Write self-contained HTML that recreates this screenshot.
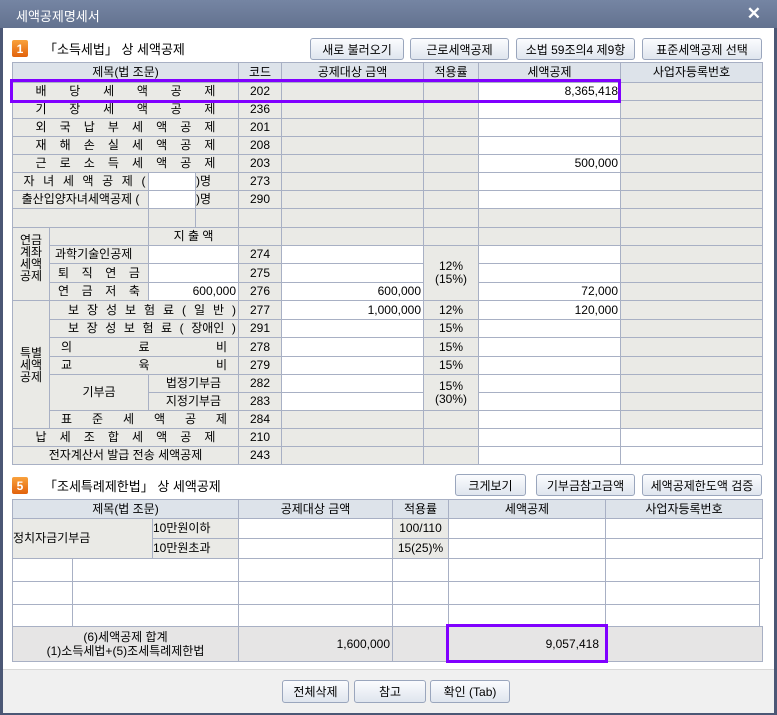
<!DOCTYPE html>
<html><head><meta charset="utf-8"><style>
*{margin:0;padding:0;box-sizing:border-box}
body{width:777px;height:715px;background:#4b5775;position:relative;overflow:hidden;font-family:"Liberation Sans","Noto Sans CJK KR",sans-serif;font-size:12px;color:#000}
#title{position:absolute;left:0;top:0;width:777px;height:28px;background:linear-gradient(#7585a3,#63728f);color:#fff;font-size:13px;padding:6px 0 0 16px}
#x{position:absolute;right:16px;top:4px;color:#fff;font-size:17px;font-weight:bold}
#body{position:absolute;left:3px;top:28px;width:771px;height:642px;background:#fff}
#foot{position:absolute;left:3px;top:669px;width:771px;height:44px;background:#f0f0f0;border-top:1px solid #d8d8d8}
.c{position:absolute;border:1px solid #a8b0c4;display:flex;align-items:center;justify-content:center;white-space:nowrap;line-height:13px}
.g{background:#eaeae6}.w{background:#fff}.h{background:#dde3ea}
.r{justify-content:flex-end;padding-right:2px}
.d{display:flex;justify-content:space-between}
.btn{position:absolute;border:1px solid #9aa6bd;border-radius:3px;background:linear-gradient(#fbfcfe,#dfe5ee);display:flex;align-items:center;justify-content:center;font-size:12px}
.ic{position:absolute;width:16px;height:17px;border-radius:2px;background:linear-gradient(#f9a23c,#e2620c);color:#fff;font-weight:bold;font-size:12px;display:flex;align-items:center;justify-content:center}
.lbl{position:absolute;font-size:13px}
.pb{position:absolute;border:3px solid #8000ff}
</style></head><body>
<div id="title">세액공제명세서</div><div id="x">✕</div>
<div id="body"></div><div id="foot"></div>

<div class="ic" style="left:12px;top:40px">1</div>
<div class="lbl" style="left:44px;top:39px">「소득세법」 상 세액공제</div>
<div class="btn" style="left:310px;top:38px;width:94px;height:22px">새로 불러오기</div>
<div class="btn" style="left:410px;top:38px;width:99px;height:22px">근로세액공제</div>
<div class="btn" style="left:516px;top:38px;width:119px;height:22px">소법 59조의4 제9항</div>
<div class="btn" style="left:642px;top:38px;width:120px;height:22px">표준세액공제 선택</div>

<!-- header -->
<div class="c h" style="left:12px;top:62px;width:227px;height:21px">제목(법 조문)</div>
<div class="c h" style="left:238px;top:62px;width:44px;height:21px">코드</div>
<div class="c h" style="left:281px;top:62px;width:143px;height:21px">공제대상 금액</div>
<div class="c h" style="left:423px;top:62px;width:56px;height:21px">적용률</div>
<div class="c h" style="left:478px;top:62px;width:143px;height:21px">세액공제</div>
<div class="c h" style="left:620px;top:62px;width:143px;height:21px">사업자등록번호</div>

<!-- rows 0-4 -->
<div class="c g" style="left:12px;top:82px;width:227px;height:19px"><span class="d" style="width:180px"><span>배</span><span>당</span><span>세</span><span>액</span><span>공</span><span>제</span></span></div>
<div class="c g" style="left:238px;top:82px;width:44px;height:19px">202</div>
<div class="c g" style="left:281px;top:82px;width:143px;height:19px"></div>
<div class="c g" style="left:423px;top:82px;width:56px;height:19px"></div>
<div class="c w r" style="left:478px;top:82px;width:143px;height:19px">8,365,418</div>
<div class="c g" style="left:620px;top:82px;width:143px;height:19px"></div>

<div class="c g" style="left:12px;top:100px;width:227px;height:19px"><span class="d" style="width:180px"><span>기</span><span>장</span><span>세</span><span>액</span><span>공</span><span>제</span></span></div>
<div class="c g" style="left:238px;top:100px;width:44px;height:19px">236</div>
<div class="c g" style="left:281px;top:100px;width:143px;height:19px"></div>
<div class="c g" style="left:423px;top:100px;width:56px;height:19px"></div>
<div class="c w r" style="left:478px;top:100px;width:143px;height:19px"></div>
<div class="c g" style="left:620px;top:100px;width:143px;height:19px"></div>

<div class="c g" style="left:12px;top:118px;width:227px;height:19px"><span class="d" style="width:180px"><span>외</span><span>국</span><span>납</span><span>부</span><span>세</span><span>액</span><span>공</span><span>제</span></span></div>
<div class="c g" style="left:238px;top:118px;width:44px;height:19px">201</div>
<div class="c g" style="left:281px;top:118px;width:143px;height:19px"></div>
<div class="c g" style="left:423px;top:118px;width:56px;height:19px"></div>
<div class="c w" style="left:478px;top:118px;width:143px;height:19px"></div>
<div class="c g" style="left:620px;top:118px;width:143px;height:19px"></div>

<div class="c g" style="left:12px;top:136px;width:227px;height:19px"><span class="d" style="width:180px"><span>재</span><span>해</span><span>손</span><span>실</span><span>세</span><span>액</span><span>공</span><span>제</span></span></div>
<div class="c g" style="left:238px;top:136px;width:44px;height:19px">208</div>
<div class="c g" style="left:281px;top:136px;width:143px;height:19px"></div>
<div class="c g" style="left:423px;top:136px;width:56px;height:19px"></div>
<div class="c w" style="left:478px;top:136px;width:143px;height:19px"></div>
<div class="c g" style="left:620px;top:136px;width:143px;height:19px"></div>

<div class="c g" style="left:12px;top:154px;width:227px;height:19px"><span class="d" style="width:180px"><span>근</span><span>로</span><span>소</span><span>득</span><span>세</span><span>액</span><span>공</span><span>제</span></span></div>
<div class="c g" style="left:238px;top:154px;width:44px;height:19px">203</div>
<div class="c g" style="left:281px;top:154px;width:143px;height:19px"></div>
<div class="c g" style="left:423px;top:154px;width:56px;height:19px"></div>
<div class="c w r" style="left:478px;top:154px;width:143px;height:19px">500,000</div>
<div class="c g" style="left:620px;top:154px;width:143px;height:19px"></div>

<!-- rows 5-6 -->
<div class="c g" style="left:12px;top:172px;width:137px;height:19px"><span class="d" style="width:122px;margin-left:8px"><span>자</span><span>녀</span><span>세</span><span>액</span><span>공</span><span>제</span><span>(</span></span></div>
<div class="c w" style="left:148px;top:172px;width:48px;height:19px"></div>
<div class="c g" style="left:195px;top:172px;width:44px;height:19px;justify-content:flex-start">)명</div>
<div class="c g" style="left:238px;top:172px;width:44px;height:19px">273</div>
<div class="c g" style="left:281px;top:172px;width:143px;height:19px"></div>
<div class="c g" style="left:423px;top:172px;width:56px;height:19px"></div>
<div class="c w" style="left:478px;top:172px;width:143px;height:19px"></div>
<div class="c g" style="left:620px;top:172px;width:143px;height:19px"></div>

<div class="c g" style="left:12px;top:190px;width:137px;height:19px">출산입양자녀세액공제 (</div>
<div class="c w" style="left:148px;top:190px;width:48px;height:19px"></div>
<div class="c g" style="left:195px;top:190px;width:44px;height:19px;justify-content:flex-start">)명</div>
<div class="c g" style="left:238px;top:190px;width:44px;height:19px">290</div>
<div class="c g" style="left:281px;top:190px;width:143px;height:19px"></div>
<div class="c g" style="left:423px;top:190px;width:56px;height:19px"></div>
<div class="c w" style="left:478px;top:190px;width:143px;height:19px"></div>
<div class="c g" style="left:620px;top:190px;width:143px;height:19px"></div>

<!-- row 7 -->
<div class="c g" style="left:12px;top:208px;width:137px;height:20px"></div>
<div class="c g" style="left:148px;top:208px;width:48px;height:20px"></div>
<div class="c g" style="left:195px;top:208px;width:44px;height:20px"></div>
<div class="c g" style="left:238px;top:208px;width:44px;height:20px"></div>
<div class="c g" style="left:281px;top:208px;width:143px;height:20px"></div>
<div class="c g" style="left:423px;top:208px;width:56px;height:20px"></div>
<div class="c g" style="left:478px;top:208px;width:143px;height:20px"></div>
<div class="c g" style="left:620px;top:208px;width:143px;height:20px"></div>

<!-- 연금 group -->
<div class="c g" style="left:12px;top:227px;width:38px;height:74px;align-items:flex-start;padding-top:6px;white-space:normal;text-align:center;line-height:12px">연금<br>계좌<br>세액<br>공제</div>
<div class="c g" style="left:49px;top:227px;width:100px;height:19px"></div>
<div class="c g" style="left:148px;top:227px;width:91px;height:19px">지 출 액</div>
<div class="c g" style="left:238px;top:227px;width:44px;height:19px"></div>
<div class="c g" style="left:281px;top:227px;width:143px;height:19px"></div>
<div class="c g" style="left:423px;top:227px;width:56px;height:19px"></div>
<div class="c g" style="left:478px;top:227px;width:143px;height:19px"></div>
<div class="c g" style="left:620px;top:227px;width:143px;height:19px"></div>

<div class="c g" style="left:49px;top:245px;width:100px;height:19px;justify-content:flex-start;padding-left:5px">과학기술인공제</div>
<div class="c w" style="left:148px;top:245px;width:91px;height:19px"></div>
<div class="c g" style="left:238px;top:245px;width:44px;height:19px">274</div>
<div class="c w" style="left:281px;top:245px;width:143px;height:19px"></div>
<div class="c w" style="left:478px;top:245px;width:143px;height:19px"></div>
<div class="c g" style="left:620px;top:245px;width:143px;height:19px"></div>

<div class="c g" style="left:49px;top:263px;width:100px;height:20px"><span class="d" style="width:82px"><span>퇴</span><span>직</span><span>연</span><span>금</span></span></div>
<div class="c w" style="left:148px;top:263px;width:91px;height:20px"></div>
<div class="c g" style="left:238px;top:263px;width:44px;height:20px">275</div>
<div class="c w" style="left:281px;top:263px;width:143px;height:20px"></div>
<div class="c w" style="left:478px;top:263px;width:143px;height:20px"></div>
<div class="c g" style="left:620px;top:263px;width:143px;height:20px"></div>

<div class="c g" style="left:49px;top:282px;width:100px;height:19px"><span class="d" style="width:82px"><span>연</span><span>금</span><span>저</span><span>축</span></span></div>
<div class="c w r" style="left:148px;top:282px;width:91px;height:19px">600,000</div>
<div class="c g" style="left:238px;top:282px;width:44px;height:19px">276</div>
<div class="c w r" style="left:281px;top:282px;width:143px;height:19px">600,000</div>
<div class="c w r" style="left:478px;top:282px;width:143px;height:19px">72,000</div>
<div class="c g" style="left:620px;top:282px;width:143px;height:19px"></div>
<div class="c g" style="left:423px;top:245px;width:56px;height:56px;text-align:center;white-space:normal">12%<br>(15%)</div>

<!-- 특별 group -->
<div class="c g" style="left:12px;top:300px;width:38px;height:129px;white-space:normal;text-align:center;line-height:12px">특별<br>세액<br>공제</div>

<div class="c g" style="left:49px;top:300px;width:190px;height:20px"><span class="d" style="width:168px;margin-left:16px"><span>보</span><span>장</span><span>성</span><span>보</span><span>험</span><span>료</span><span>(</span><span>일</span><span>반</span><span>)</span></span></div>
<div class="c g" style="left:238px;top:300px;width:44px;height:20px">277</div>
<div class="c w r" style="left:281px;top:300px;width:143px;height:20px">1,000,000</div>
<div class="c g" style="left:423px;top:300px;width:56px;height:20px">12%</div>
<div class="c w r" style="left:478px;top:300px;width:143px;height:20px">120,000</div>
<div class="c g" style="left:620px;top:300px;width:143px;height:20px"></div>

<div class="c g" style="left:49px;top:319px;width:190px;height:19px"><span class="d" style="width:168px;margin-left:16px"><span>보</span><span>장</span><span>성</span><span>보</span><span>험</span><span>료</span><span>(</span><span>장애인</span><span>)</span></span></div>
<div class="c g" style="left:238px;top:319px;width:44px;height:19px">291</div>
<div class="c w" style="left:281px;top:319px;width:143px;height:19px"></div>
<div class="c g" style="left:423px;top:319px;width:56px;height:19px">15%</div>
<div class="c w" style="left:478px;top:319px;width:143px;height:19px"></div>
<div class="c g" style="left:620px;top:319px;width:143px;height:19px"></div>

<div class="c g" style="left:49px;top:337px;width:190px;height:20px"><span class="d" style="width:166px"><span>의</span><span>료</span><span>비</span></span></div>
<div class="c g" style="left:238px;top:337px;width:44px;height:20px">278</div>
<div class="c w" style="left:281px;top:337px;width:143px;height:20px"></div>
<div class="c g" style="left:423px;top:337px;width:56px;height:20px">15%</div>
<div class="c w" style="left:478px;top:337px;width:143px;height:20px"></div>
<div class="c g" style="left:620px;top:337px;width:143px;height:20px"></div>

<div class="c g" style="left:49px;top:356px;width:190px;height:19px"><span class="d" style="width:166px"><span>교</span><span>육</span><span>비</span></span></div>
<div class="c g" style="left:238px;top:356px;width:44px;height:19px">279</div>
<div class="c w" style="left:281px;top:356px;width:143px;height:19px"></div>
<div class="c g" style="left:423px;top:356px;width:56px;height:19px">15%</div>
<div class="c w" style="left:478px;top:356px;width:143px;height:19px"></div>
<div class="c g" style="left:620px;top:356px;width:143px;height:19px"></div>

<div class="c g" style="left:49px;top:374px;width:100px;height:37px">기부금</div>
<div class="c g" style="left:148px;top:374px;width:91px;height:19px">법정기부금</div>
<div class="c g" style="left:238px;top:374px;width:44px;height:19px">282</div>
<div class="c w" style="left:281px;top:374px;width:143px;height:19px"></div>
<div class="c w" style="left:478px;top:374px;width:143px;height:19px"></div>
<div class="c g" style="left:620px;top:374px;width:143px;height:19px"></div>
<div class="c g" style="left:148px;top:392px;width:91px;height:19px">지정기부금</div>
<div class="c g" style="left:238px;top:392px;width:44px;height:19px">283</div>
<div class="c w" style="left:281px;top:392px;width:143px;height:19px"></div>
<div class="c w" style="left:478px;top:392px;width:143px;height:19px"></div>
<div class="c g" style="left:620px;top:392px;width:143px;height:19px"></div>
<div class="c g" style="left:423px;top:374px;width:56px;height:37px;text-align:center;white-space:normal">15%<br>(30%)</div>

<div class="c g" style="left:49px;top:410px;width:190px;height:19px"><span class="d" style="width:166px"><span>표</span><span>준</span><span>세</span><span>액</span><span>공</span><span>제</span></span></div>
<div class="c g" style="left:238px;top:410px;width:44px;height:19px">284</div>
<div class="c g" style="left:281px;top:410px;width:143px;height:19px"></div>
<div class="c g" style="left:423px;top:410px;width:56px;height:19px"></div>
<div class="c w" style="left:478px;top:410px;width:143px;height:19px"></div>
<div class="c g" style="left:620px;top:410px;width:143px;height:19px"></div>

<div class="c g" style="left:12px;top:428px;width:227px;height:19px"><span class="d" style="width:180px"><span>납</span><span>세</span><span>조</span><span>합</span><span>세</span><span>액</span><span>공</span><span>제</span></span></div>
<div class="c g" style="left:238px;top:428px;width:44px;height:19px">210</div>
<div class="c g" style="left:281px;top:428px;width:143px;height:19px"></div>
<div class="c g" style="left:423px;top:428px;width:56px;height:19px"></div>
<div class="c w" style="left:478px;top:428px;width:143px;height:19px"></div>
<div class="c w" style="left:620px;top:428px;width:143px;height:19px"></div>

<div class="c g" style="left:12px;top:446px;width:227px;height:19px">전자계산서 발급 전송 세액공제</div>
<div class="c g" style="left:238px;top:446px;width:44px;height:19px">243</div>
<div class="c g" style="left:281px;top:446px;width:143px;height:19px"></div>
<div class="c g" style="left:423px;top:446px;width:56px;height:19px"></div>
<div class="c w" style="left:478px;top:446px;width:143px;height:19px"></div>
<div class="c w" style="left:620px;top:446px;width:143px;height:19px"></div>

<div class="pb" style="left:10px;top:79px;width:611px;height:24px"></div>

<!-- section 5 -->
<div class="ic" style="left:12px;top:477px">5</div>
<div class="lbl" style="left:44px;top:476px">「조세특례제한법」 상 세액공제</div>
<div class="btn" style="left:455px;top:474px;width:71px;height:22px">크게보기</div>
<div class="btn" style="left:536px;top:474px;width:99px;height:22px">기부금참고금액</div>
<div class="btn" style="left:642px;top:474px;width:120px;height:22px">세액공제한도액 검증</div>

<div class="c h" style="left:12px;top:499px;width:227px;height:20px">제목(법 조문)</div>
<div class="c h" style="left:238px;top:499px;width:155px;height:20px">공제대상 금액</div>
<div class="c h" style="left:392px;top:499px;width:57px;height:20px">적용률</div>
<div class="c h" style="left:448px;top:499px;width:158px;height:20px">세액공제</div>
<div class="c h" style="left:605px;top:499px;width:158px;height:20px">사업자등록번호</div>

<div class="c g" style="left:12px;top:518px;width:141px;height:41px;justify-content:flex-start">정치자금기부금</div>
<div class="c g" style="left:152px;top:518px;width:87px;height:21px;justify-content:flex-start">10만원이하</div>
<div class="c w" style="left:238px;top:518px;width:155px;height:21px"></div>
<div class="c g" style="left:392px;top:518px;width:57px;height:21px">100/110</div>
<div class="c w" style="left:448px;top:518px;width:158px;height:21px"></div>
<div class="c w" style="left:605px;top:518px;width:158px;height:21px"></div>
<div class="c g" style="left:152px;top:538px;width:87px;height:21px;justify-content:flex-start">10만원초과</div>
<div class="c w" style="left:238px;top:538px;width:155px;height:21px"></div>
<div class="c g" style="left:392px;top:538px;width:57px;height:21px">15(25)%</div>
<div class="c w" style="left:448px;top:538px;width:158px;height:21px"></div>
<div class="c w" style="left:605px;top:538px;width:158px;height:21px"></div>

<div class="c w" style="left:12px;top:558px;width:61px;height:24px"></div><div class="c w" style="left:72px;top:558px;width:167px;height:24px"></div><div class="c w" style="left:238px;top:558px;width:155px;height:24px"></div><div class="c w" style="left:392px;top:558px;width:57px;height:24px"></div><div class="c w" style="left:448px;top:558px;width:158px;height:24px"></div><div class="c w" style="left:605px;top:558px;width:155px;height:24px"></div>
<div class="c w" style="left:12px;top:581px;width:61px;height:24px"></div><div class="c w" style="left:72px;top:581px;width:167px;height:24px"></div><div class="c w" style="left:238px;top:581px;width:155px;height:24px"></div><div class="c w" style="left:392px;top:581px;width:57px;height:24px"></div><div class="c w" style="left:448px;top:581px;width:158px;height:24px"></div><div class="c w" style="left:605px;top:581px;width:155px;height:24px"></div>
<div class="c w" style="left:12px;top:604px;width:61px;height:23px"></div><div class="c w" style="left:72px;top:604px;width:167px;height:23px"></div><div class="c w" style="left:238px;top:604px;width:155px;height:23px"></div><div class="c w" style="left:392px;top:604px;width:57px;height:23px"></div><div class="c w" style="left:448px;top:604px;width:158px;height:23px"></div><div class="c w" style="left:605px;top:604px;width:155px;height:23px"></div>

<div class="c g" style="left:12px;top:626px;width:227px;height:36px;white-space:normal;text-align:center;line-height:14px;background:#e6e5e5">(6)세액공제 합계<br>(1)소득세법+(5)조세특례제한법</div>
<div class="c g r" style="left:238px;top:626px;width:155px;height:36px;background:#e6e5e5">1,600,000</div>
<div class="c g" style="left:392px;top:626px;width:57px;height:36px;background:#e6e5e5"></div>
<div class="c g r" style="left:448px;top:626px;width:158px;height:36px;background:#e6e5e5;padding-right:6px">9,057,418</div>
<div class="c g" style="left:605px;top:626px;width:158px;height:36px;background:#e6e5e5"></div>
<div class="pb" style="left:446px;top:624px;width:162px;height:39px"></div>

<div class="btn" style="left:282px;top:680px;width:67px;height:23px">전체삭제</div>
<div class="btn" style="left:354px;top:680px;width:72px;height:23px">참고</div>
<div class="btn" style="left:430px;top:680px;width:80px;height:23px">확인 (Tab)</div>
</body></html>
